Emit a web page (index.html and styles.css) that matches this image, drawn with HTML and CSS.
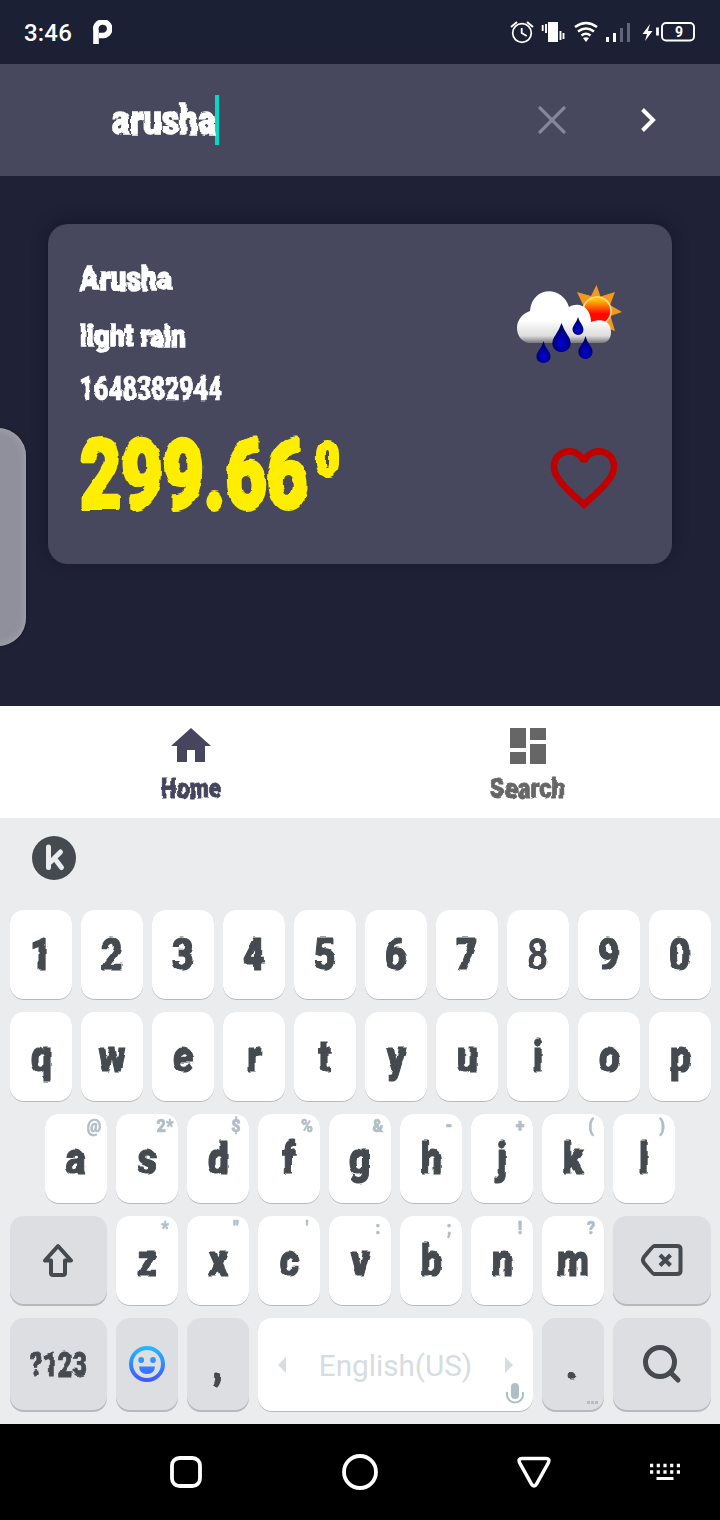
FILE: index.html
```html
<!DOCTYPE html>
<html lang="en">
<head>
<meta charset="utf-8">
<title>Weather</title>
<link rel="stylesheet" href="styles.css">
</head>
<body>
<svg class="defs" width="0" height="0">
  <defs>
    <filter id="rough" x="-10%" y="-10%" width="120%" height="120%" color-interpolation-filters="sRGB">
      <feTurbulence type="fractalNoise" baseFrequency="0.05 0.13" numOctaves="1" seed="7" result="n"/>
      <feDisplacementMap in="SourceGraphic" in2="n" scale="5" xChannelSelector="R" yChannelSelector="A"/>
    </filter>
  </defs>
</svg>
<div class="screen">
  <div class="status">
    <span class="clock">3:46</span>
    <svg class="pandora" width="20" height="24" viewBox="92 20 20 24"><path d="M96 44V30.500A7 6.800 0 1 1 102.500 35.500H99" fill="none" stroke="#fff" stroke-width="5.600"/></svg>
    <svg class="tray" width="190" height="32" viewBox="508 16 190 32" fill="none" stroke="#fff">
      <circle cx="522" cy="33" r="9.300" stroke-width="1.700"/><path d="M511 27l6-5M533 27l-6-5" stroke-width="2"/><path d="M521.700 28v5l5 3" stroke-width="1.800"/>
      <path d="M548 22h10v20h-10z" fill="#fff" stroke="none"/><path d="M542.700 25v6M546 24v9M560.500 31v9M563.500 33v6" stroke-width="1.900"/>
      <path d="M575 27q11-8 22 0M578 31.500q8-6 16 0M581.500 35.500q4.500-3.500 9 0" stroke-width="2.600"/><path d="M583 38q3-1.500 6 0l-3 4z" fill="#fff" stroke="none"/>
      <path d="M607.500 37v5M614.500 33v9" stroke-width="3"/><path d="M621.500 28v14M628.500 23v19" stroke="#62657a" stroke-width="3"/>
      <path d="M650 24l-7.500 10h4.500l-2 7 7.500-10H648z" fill="#fff" stroke="none"/><path d="M657.500 27.500v8" stroke-width="2.800"/>
      <rect x="662" y="23" width="32" height="17.500" rx="4" stroke-width="1.900"/>
      <text class="charge" x="679" y="36.500" text-anchor="middle">9</text>
    </svg>
  </div>

  <header class="search">
    <svg class="display query" width="104" height="50"><text y="38.500" font-size="40" textLength="104" lengthAdjust="spacingAndGlyphs">arusha</text></svg>
    <span class="caret"></span>
    <svg class="clear" width="28" height="28" viewBox="0 0 28 28"><path d="M1 1l26 26M27 1L1 27" stroke="#85869a" stroke-width="3.300"/></svg>
    <svg class="go" width="16" height="24" viewBox="0 0 16 24"><path d="M2.500 1.500l10.500 10.500L2.500 22.500" fill="none" stroke="#fff" stroke-width="4"/></svg>
  </header>

  <main class="content">
    <section class="card">
      <div class="facts">
        <svg class="display" width="92" height="50"><text y="34" font-size="34" textLength="92" lengthAdjust="spacingAndGlyphs">Arusha</text></svg>
        <svg class="display" width="106" height="56"><text y="39.500" font-size="30" textLength="106" lengthAdjust="spacingAndGlyphs">light rain</text></svg>
        <svg class="display thin" width="142" height="54"><text y="38" font-size="33" textLength="142" lengthAdjust="spacingAndGlyphs">1648382944</text></svg>
        <svg class="display temp" width="262" height="116"><text x="0" y="92" font-size="96" textLength="228" lengthAdjust="spacingAndGlyphs">299.66</text><text x="236" y="59" font-size="46" textLength="23" lengthAdjust="spacingAndGlyphs">0</text></svg>
      </div>
      <div class="side">
        <svg class="weather" width="108" height="84" viewBox="516 284 108 84">
          <defs>
            <linearGradient id="sun" x1="0" y1="0" x2="0" y2="1"><stop offset=".1" stop-color="#ffc400"/><stop offset=".6" stop-color="#ff0800"/></linearGradient>
            <linearGradient id="cloud" gradientUnits="userSpaceOnUse" x1="0" y1="292" x2="0" y2="343"><stop offset=".55" stop-color="#fff"/><stop offset=".86" stop-color="#ddd"/><stop offset="1" stop-color="#77777b"/></linearGradient>
            <radialGradient id="drop" cy=".68"><stop offset="0" stop-color="#0000e0"/><stop offset="1" stop-color="#00006c"/></radialGradient>
          </defs>
          <path d="M596.500 285l4 11.500 14.500-4.500-5 13 12 7-11.500 4 4.500 15-14-5-10 5-11-12 4-12-7-15 14 4z" fill="#f29a18"/>
          <circle cx="597" cy="311" r="14" fill="url(#sun)" stroke="#ffd9a0" stroke-width="1.500"/>
          <path d="M528 343c-7-2-11-8-11-15 0-8 5-14 13-17C532 286 562 285 569 307c10-6 22 0 22 15 14-5 20 2 20 10 0 7-4 11-9 11z" fill="url(#cloud)"/>
          <g fill="url(#drop)">
            <path d="M561.500 323q2 6 6 12c7 10 1 17-6 17s-13-7-6-17q4-6 6-12z"/>
            <path d="M578 317q1 4 4 8c4 7-1 10-4 10s-8-4-4-10q3-4 4-8z"/>
            <path d="M585.500 336q1 5 5 10c5 7 0 13-5 13s-10-6-5-13q4-5 5-10z"/>
            <path d="M543.500 341q1 5 5 10c5 7 0 12-5 12s-10-5-5-12q4-5 5-10z"/>
          </g>
        </svg>
        <svg width="80" height="80" viewBox="0 0 24 24"><path fill="#bf0000" d="M16.500 3c-1.740 0-3.410.81-4.500 2.090C10.910 3.810 9.240 3 7.500 3 4.420 3 2 5.420 2 8.500c0 3.780 3.400 6.860 8.550 11.540L12 21.350l1.450-1.320C18.600 15.360 22 12.280 22 8.500 22 5.420 19.580 3 16.500 3zm-4.400 15.550l-.1.100-.1-.1C7.140 14.240 4 11.390 4 8.500 4 6.500 5.500 5 7.500 5c1.540 0 3.040.99 3.570 2.360h1.870C13.460 5.990 14.960 5 16.500 5c2 0 3.500 1.500 3.500 3.500 0 2.890-3.140 5.740-7.900 10.050z"/></svg>
      </div>
    </section>
    <div class="edge-handle"></div>
  </main>

  <nav class="tabs">
    <div class="tab active">
      <svg width="48" height="48" viewBox="0 0 24 24" fill="currentColor"><path d="M10 20v-6h4v6h5v-8h3L12 3 2 12h3v8z"/></svg>
      <svg class="display label" width="60" height="32"><text y="28" font-size="27" textLength="60" lengthAdjust="spacingAndGlyphs">Home</text></svg>
    </div>
    <div class="tab">
      <svg width="48" height="48" viewBox="0 0 24 24" fill="currentColor"><path d="M3 13h8V3H3v10zm0 8h8v-6H3v6zm10 0h8V11h-8v10zm0-18v6h8V3h-8z"/></svg>
      <svg class="display label" width="75" height="32"><text y="28" font-size="27" textLength="75" lengthAdjust="spacingAndGlyphs">Search</text></svg>
    </div>
  </nav>

  <div class="keyboard">
    <div class="toolbar">
      <svg width="44" height="44" viewBox="0 0 44 44"><circle cx="22" cy="22" r="22" fill="#454a50"/><path d="M16.500 11v20.500M28.500 16l-10 10M23 23l6.500 8.500" fill="none" stroke="#ebecee" stroke-width="5" stroke-linecap="round"/></svg>
    </div>
    <div class="row">
      <div class="key"><b>1</b></div><div class="key"><b>2</b></div><div class="key"><b>3</b></div><div class="key"><b>4</b></div><div class="key"><b>5</b></div><div class="key"><b>6</b></div><div class="key"><b>7</b></div><div class="key"><b class="light">8</b></div><div class="key"><b>9</b></div><div class="key"><b>0</b></div>
    </div>
    <div class="row">
      <div class="key"><b>q</b></div><div class="key"><b>w</b></div><div class="key"><b>e</b></div><div class="key"><b>r</b></div><div class="key"><b>t</b></div><div class="key"><b>y</b></div><div class="key"><b>u</b></div><div class="key"><b>i</b></div><div class="key"><b>o</b></div><div class="key"><b>p</b></div>
    </div>
    <div class="row inset">
      <div class="key"><b>a</b><i>@</i></div><div class="key"><b>s</b><i>2*</i></div><div class="key"><b>d</b><i>$</i></div><div class="key"><b>f</b><i>%</i></div><div class="key"><b>g</b><i>&amp;</i></div><div class="key"><b>h</b><i>-</i></div><div class="key"><b>j</b><i>+</i></div><div class="key"><b>k</b><i>(</i></div><div class="key"><b>l</b><i>)</i></div>
    </div>
    <div class="row">
      <div class="key wide dim"><svg class="shift" width="32" height="34" viewBox="0 0 32 34"><path d="M16 3L3 17.500h6V30q0 2 2 2h10q2 0 2-2V17.500h6z" fill="none" stroke="#454a50" stroke-width="4" stroke-linejoin="round"/></svg></div>
      <div class="key"><b>z</b><i>*</i></div><div class="key"><b>x</b><i>"</i></div><div class="key"><b>c</b><i>'</i></div><div class="key"><b>v</b><i>:</i></div><div class="key"><b>b</b><i>;</i></div><div class="key"><b>n</b><i>!</i></div><div class="key"><b>m</b><i>?</i></div>
      <div class="key wide dim"><svg class="shift" width="42" height="34" viewBox="0 0 42 34" fill="none" stroke="#454a50" stroke-width="4" stroke-linejoin="round"><path d="M13 3h23q3.500 0 3.500 3v22q0 3-3.500 3H13Q12 31 3 20q-2-3 0-6Q12 3 13 3z"/><path d="M19 12l10.500 10.500M29.500 12L19 22.500"/></svg></div>
    </div>
    <div class="row last">
      <div class="key wide dim"><svg class="display symbols" width="57" height="40"><text y="32" font-size="33" textLength="57" lengthAdjust="spacingAndGlyphs">?123</text></svg></div>
      <div class="key dim"><svg width="36" height="36" viewBox="0 0 36 36"><defs><linearGradient id="smile" gradientUnits="userSpaceOnUse" x1="0" y1="0" x2="0" y2="36"><stop stop-color="#22bdff"/><stop offset="1" stop-color="#4055ff"/></linearGradient></defs><circle cx="18" cy="18" r="16" fill="none" stroke="url(#smile)" stroke-width="4"/><g fill="url(#smile)"><circle cx="12.200" cy="14" r="2.900"/><circle cx="24" cy="14" r="2.900"/><path d="M10 20.500h16q-.5 7.500-8 7.500t-8-7.500z"/></g></svg></div>
      <div class="key dim"><b>,</b></div>
      <div class="key space"><svg width="8" height="16" viewBox="0 0 8 16"><path d="M8 0v16L0 8z" fill="#d6dde1"/></svg><span>English(US)</span><svg width="8" height="16" viewBox="0 0 8 16"><path d="M0 0v16l8-8z" fill="#d6dde1"/></svg>
        <svg class="mic" width="18" height="21" viewBox="0 0 18 21"><rect x="5" width="8" height="16" rx="4" fill="#b0bec8"/><path d="M1 9v3a8 7.500 0 0 0 16 0V9" fill="none" stroke="#b0bec8" stroke-width="2"/></svg></div>
      <div class="key dim"><b>.</b><svg class="more" width="11" height="3"><path d="M0 1.500h3M4 1.500h3M8 1.500h3" stroke="#b0bec8" stroke-width="3"/></svg></div>
      <div class="key wide dim"><svg width="40" height="40" viewBox="0 0 40 40" fill="none" stroke="#454a50" stroke-width="5"><circle cx="18" cy="18" r="14.500"/><path d="M28.500 28.500l7.500 7.500" stroke-linecap="round"/></svg></div>
    </div>
  </div>

  <div class="system">
    <svg width="32" height="32" viewBox="0 0 32 32"><rect x="2" y="2" width="28" height="28" rx="7.500" fill="none" stroke="#fff" stroke-width="3.800"/></svg>
    <svg width="36" height="36" viewBox="0 0 36 36"><circle cx="18" cy="18" r="16" fill="none" stroke="#fff" stroke-width="3.800"/></svg>
    <svg width="34" height="32" viewBox="0 0 34 32"><path d="M5 2.500h24q4 0 2.500 4L19.500 28q-2.500 4-5 0L2.500 6.500Q1 2.500 5 2.500z" fill="none" stroke="#fff" stroke-width="3.500"/></svg>
    <svg width="32" height="18" viewBox="0 0 32 18"><path d="M1 2.500h31M1 9h31" stroke="#fff" stroke-width="3.500" stroke-dasharray="3.200 3.500"/><path d="M7.500 15.500h17" stroke="#fff" stroke-width="3"/></svg>
  </div>
</div>
</body>
</html>
```
FILE: styles.css
```css
* { box-sizing: border-box; }
body { margin: 0; background: #000; font-family: Roboto, "Liberation Sans", sans-serif; }
svg { display: block; flex: none; }
.defs { position: absolute; }
.screen { width: 720px; height: 1520px; display: flex; flex-direction: column; overflow: hidden; }
.display { overflow: visible; font-weight: 900; fill: currentColor; stroke: currentColor; stroke-width: 1.4px; filter: url(#rough); }
.display.thin { stroke-width: .7px; }
.display.label, .display.symbols { stroke-width: .8px; }

.status { height: 64px; background: #1c2034; color: #fff; display: flex; align-items: center; padding: 0 22px 0 24px; }
.clock { width: 68px; font-size: 24px; font-weight: 500; letter-spacing: .2px; padding-top: 2px; }
.tray { margin-left: auto; }
.charge { font-size: 14px; font-weight: 700; fill: #fff; stroke: none; }

.search { height: 112px; background: #47485e; color: #fff; display: flex; align-items: center; padding: 0 64px 0 112px; }
.caret { width: 4px; height: 50px; background: #03dac5; margin-left: -1px; }
.clear { margin-left: auto; margin-right: 74px; }

.content { position: relative; height: 530px; background: #1f2136; padding: 48px; }
.card { height: 340px; border-radius: 20px; background: #47485e; color: #fff; padding: 32px 48px 32px 32px; display: flex; justify-content: space-between; box-shadow: 0 -3px 16px rgba(10, 10, 28, .4); }
.facts { display: flex; flex-direction: column; }
.display.temp { color: #ffee00; stroke-width: 4px; stroke-linejoin: bevel; }
.side { display: flex; flex-direction: column; align-items: flex-end; gap: 70px; padding-top: 28px; }
.edge-handle { position: absolute; left: -30px; top: 252px; width: 56px; height: 218px; border-radius: 28px; background: #90909c; box-shadow: inset 0 0 8px #a9a9b2, 0 0 4px rgba(0, 0, 0, .3); }

.tabs { height: 112px; background: #fff; display: flex; padding: 16px 24px 0 22px; }
.tab { flex: 1; display: flex; flex-direction: column; align-items: center; color: #666; }
.tab.active { color: #45465e; }

.keyboard { height: 606px; background: #ebecee; color: #454a50; padding: 18px 9px 0 10px; }
.toolbar { height: 74px; padding-left: 22px; }
.row { display: flex; gap: 9px; margin-bottom: 12px; }
.inset { padding-left: 35px; }
.key { position: relative; width: 62px; height: 90px; flex: none; border-radius: 14px; background: #fff; box-shadow: inset 0 -1px #b8b9bf; display: flex; align-items: center; justify-content: center; }
.dim { background: #dddee2; box-shadow: inset 0 -2px #b8b9be; }
.wide { width: 97px; }
.wide:last-child { width: 98px; }
.shift { margin: 0 1px 2px 0; }
.last .key { height: 94px; padding-bottom: 2px; }
.key b { font-size: 44px; font-weight: 900; line-height: 90px; -webkit-text-stroke: 1.2px currentColor; transform: scaleX(.84); filter: url(#rough); }
.key b.light { font-weight: 700; -webkit-text-stroke: 0; }
.key i { position: absolute; top: 0; right: 3px; width: 20px; text-align: center; font-style: normal; font-size: 19px; line-height: 24px; font-weight: 900; color: #b0bec8; -webkit-text-stroke: .6px currentColor; transform: scaleX(.85); }
.last .key b { line-height: 92px; }
.last .space { width: 275px; justify-content: space-between; padding: 0 20px; }
.space span { font-size: 29.700px; color: #d6dde1; }
.mic { position: absolute; right: 9px; bottom: 8px; }
.more { position: absolute; right: 6px; bottom: 8px; }

.system { height: 96px; background: #000; display: grid; grid-template-columns: 170px 172px 175px 132px 71px; align-items: center; }
.system svg:first-child { grid-column: 2; }
.system svg { justify-self: start; }
```
